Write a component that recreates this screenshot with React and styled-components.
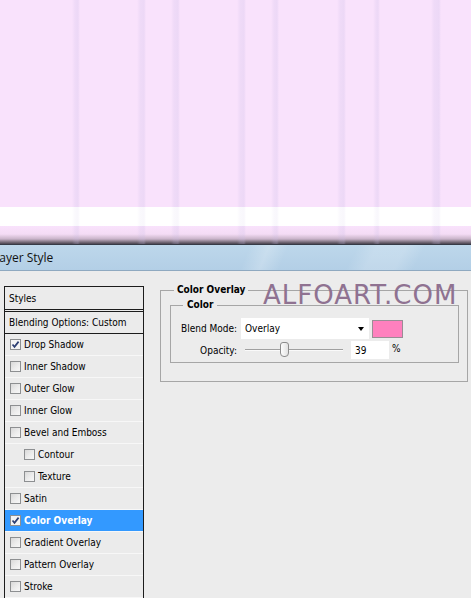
import React from 'react';
import styled, { createGlobalStyle } from 'styled-components';

const Global = createGlobalStyle`
  html, body { margin: 0; padding: 0; }
  body {
    width: 471px;
    height: 598px;
    overflow: hidden;
    background: #ececec;
    font-family: "DejaVu Sans Condensed", "DejaVu Sans", sans-serif;
    color: #000;
  }
`;

const bands = [
  [72, 80], [137, 146], [171, 180], [237, 246],
  [271, 279], [337, 346], [373, 380], [431, 441],
];

const stripe = (a) =>
  `linear-gradient(to right, transparent 0px, ${bands
    .map(
      ([s, e]) =>
        `transparent ${s}px, rgba(200,188,230,${a}) ${s + 3}px, rgba(200,188,230,${a * 1.3}) ${e - 2}px, transparent ${e}px`
    )
    .join(', ')})`;

const Canvas = styled.div`
  display: flex;
  flex-direction: column;
  height: 244px;
`;

const PinkField = styled.div`
  height: 207px;
  background: ${stripe(0.2)}, #f9e2fc;
`;

const WhiteBand = styled.div`
  height: 19px;
  background: ${stripe(0.09)}, #ffffff;
`;

const Fade = styled.div`
  height: 18px;
  background: ${stripe(0.18)},
    linear-gradient(to bottom, #f9e2fc 0%, #f4dcf5 45%, #c9b4c9 72%, #6d6370 92%, #4a4450 100%);
`;

const Dialog = styled.div`
  border-top: 1px solid #363a46;
  display: flex;
  flex-direction: column;
`;

const TitleBar = styled.div`
  height: 25px;
  border-bottom: 1px solid #8fa9c0;
  display: flex;
  align-items: center;
  background:
    linear-gradient(112deg, transparent 0 52%, rgba(255,255,255,0.22) 56%, transparent 60%),
    linear-gradient(118deg, transparent 0 74%, rgba(255,255,255,0.18) 78% 84%, transparent 88%),
    linear-gradient(to bottom, #bdd7eb 0%, #b3cfe6 100%);
`;

const TitleText = styled.span`
  font-family: "Open Sans", "Noto Sans", sans-serif;
  font-size: 12px;
  margin-left: -7px;
  color: #111;
`;

const Body = styled.div`
  position: relative;
  display: flex;
  align-items: flex-start;
  padding: 12px 0 0 4px;
  height: 315px;
  overflow: hidden;
  background: #ececec;
`;

const List = styled.div`
  margin-top: 3px;
  width: 140px;
  box-sizing: border-box;
  border: 1px solid #1c1c1c;
  border-bottom: none;
  display: flex;
  flex-direction: column;
  font-size: 10px;
  background: #ebebeb;
`;

const StylesHeader = styled.div`
  height: 22px;
  display: flex;
  align-items: center;
  padding-left: 4px;
  border-bottom: 1px solid #1c1c1c;
  margin-bottom: 1px;
`;

const BlendRow = styled.div`
  height: 21px;
  display: flex;
  align-items: center;
  padding-left: 4px;
  border-top: 1px solid #1c1c1c;
  border-bottom: 1px solid #1c1c1c;
`;

const CheckRow = styled.div`
  height: 21px;
  display: flex;
  align-items: center;
  gap: 3px;
  padding-left: ${(p) => (p.$indent ? 19 : 5)}px;
  border-bottom: 1px solid #f7f7f7;
  background: ${(p) => (p.$selected ? '#3399ff' : 'transparent')};
  color: ${(p) => (p.$selected ? '#ffffff' : '#000')};
  font-weight: ${(p) => (p.$selected ? 'bold' : 'normal')};
`;

const Box = styled.span`
  width: 11px;
  height: 11px;
  box-sizing: border-box;
  border: 1px solid #8d8f91;
  background: ${(p) =>
    p.$light ? '#f4f4f4' : 'linear-gradient(135deg, #d9d9d9 0%, #eeeeee 60%, #f7f7f7 100%)'};
  display: flex;
  align-items: center;
  justify-content: center;
  flex: none;
`;

const Check = ({ checked, light }) => (
  <Box $light={light || checked}>
    {checked && (
      <svg width="9" height="9" viewBox="0 0 9 9">
        <path d="M1.5 4.5 L3.5 6.8 L7.6 1.6" fill="none" stroke="#2d3f73" strokeWidth="1.7" />
      </svg>
    )}
  </Box>
);

const Right = styled.div`
  margin-left: 16px;
`;

const OuterGroup = styled.fieldset`
  margin: 0;
  width: 308px;
  box-sizing: border-box;
  border: 1px solid #a6a6a6;
  padding: 1px 8px 18px 9px;
`;

const Legend = styled.legend`
  font-weight: bold;
  font-size: 10px;
  line-height: 14px;
  padding: 0 ${(p) => p.$pad}px;
  margin-left: ${(p) => p.$shift}px;
`;

const InnerGroup = styled.fieldset`
  margin: 0;
  border: 1px solid #a6a6a6;
  padding: 6px 0 3px 0;
`;

const Grid = styled.div`
  display: grid;
  grid-template-columns: 66px auto;
  column-gap: 4px;
  row-gap: 2px;
  align-items: center;
  font-size: 10px;
`;

const Label = styled.div`
  text-align: right;
`;

const Line = styled.div`
  display: flex;
  align-items: center;
`;

const Select = styled.div`
  width: 128px;
  height: 21px;
  box-sizing: border-box;
  background: #fff;
  display: flex;
  align-items: center;
  justify-content: space-between;
  padding: 0 5px 0 4px;
`;

const Arrow = styled.span`
  width: 0;
  height: 0;
  border-left: 3.5px solid transparent;
  border-right: 3.5px solid transparent;
  border-top: 4px solid #000;
  margin-top: 1px;
`;

const Swatch = styled.div`
  margin-left: 3px;
  width: 31px;
  height: 18px;
  box-sizing: border-box;
  border: 1px solid #9a8d95;
  background: #ff80be;
`;

const Slider = styled.div`
  position: relative;
  margin-left: 4px;
  width: 98px;
  height: 18px;
  display: flex;
  align-items: center;
`;

const Track = styled.div`
  width: 100%;
  height: 0;
  border-top: 1px solid #a0a0a0;
  border-bottom: 1px solid #fafafa;
`;

const Thumb = styled.div`
  position: absolute;
  top: 1px;
  width: 9px;
  height: 15px;
  box-sizing: border-box;
  border: 1px solid #8c8c8c;
  border-radius: 3px 3px 4px 4px;
  background: linear-gradient(to right, #fdfdfd, #e2e2e2);
`;

const Field = styled.div`
  margin-left: 8px;
  width: 38px;
  height: 18px;
  box-sizing: border-box;
  background: #fff;
  padding-left: 4px;
  display: flex;
  align-items: center;
`;

const Percent = styled.span`
  margin-left: 3px;
  margin-top: -4px;
`;

const Watermark = styled.div`
  position: absolute;
  left: 263px;
  top: 11px;
  font-family: "DejaVu Sans", sans-serif;
  font-size: 26px;
  line-height: 26px;
  letter-spacing: 1px;
  color: #8f7291;
  white-space: nowrap;
`;

const rows = [
  { label: 'Drop Shadow', checked: true },
  { label: 'Inner Shadow' },
  { label: 'Outer Glow' },
  { label: 'Inner Glow' },
  { label: 'Bevel and Emboss' },
  { label: 'Contour', indent: true },
  { label: 'Texture', indent: true },
  { label: 'Satin' },
  { label: 'Color Overlay', checked: true, selected: true },
  { label: 'Gradient Overlay' },
  { label: 'Pattern Overlay' },
  { label: 'Stroke' },
];

export default function App() {
  const opacity = 39;
  return (
    <>
      <Global />
      <Canvas>
        <PinkField />
        <WhiteBand />
        <Fade />
      </Canvas>
      <Dialog>
        <TitleBar>
          <TitleText>Layer Style</TitleText>
        </TitleBar>
        <Body>
          <List>
            <StylesHeader>Styles</StylesHeader>
            <BlendRow>Blending Options: Custom</BlendRow>
            {rows.map((r) => (
              <CheckRow key={r.label} $indent={r.indent} $selected={r.selected}>
                <Check checked={r.checked} light={r.selected} />
                {r.label}
              </CheckRow>
            ))}
          </List>
          <Right>
            <OuterGroup>
              <Legend $pad={3} $shift={4}>Color Overlay</Legend>
              <InnerGroup>
                <Legend $pad={4} $shift={12}>Color</Legend>
                <Grid>
                  <Label>Blend Mode:</Label>
                  <Line>
                    <Select>
                      <span>Overlay</span>
                      <Arrow />
                    </Select>
                    <Swatch />
                  </Line>
                  <Label>Opacity:</Label>
                  <Line>
                    <Slider>
                      <Track />
                      <Thumb style={{ left: `${Math.round((opacity / 100) * 89)}px` }} />
                    </Slider>
                    <Field>{opacity}</Field>
                    <Percent>%</Percent>
                  </Line>
                </Grid>
              </InnerGroup>
            </OuterGroup>
          </Right>
          <Watermark>ALFOART.COM</Watermark>
        </Body>
      </Dialog>
    </>
  );
}
